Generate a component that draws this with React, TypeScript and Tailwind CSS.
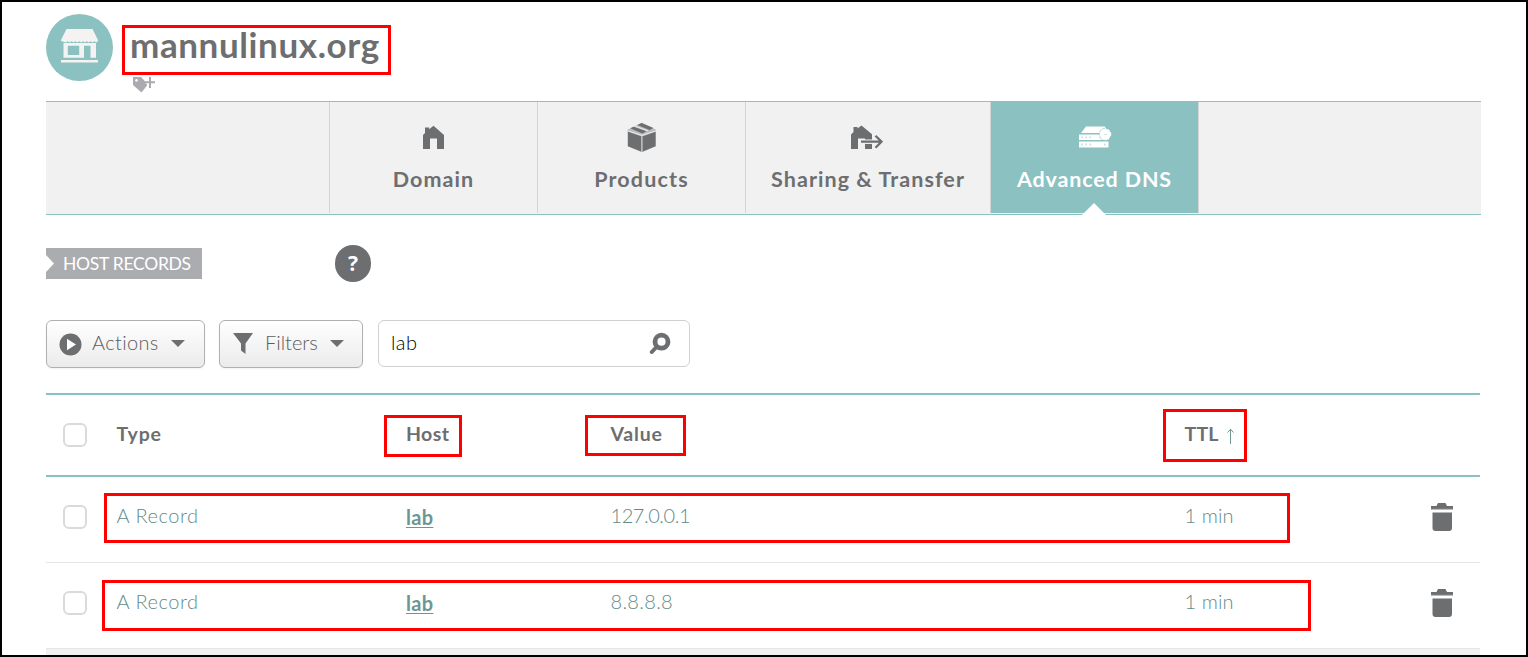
import type { ReactNode } from 'react';

function StoreIcon() {
  return (
    <svg width="67" height="67" viewBox="0 0 67 67" className="shrink-0">
      <circle cx="33.5" cy="33.5" r="33.5" fill="#8bc1c1" />
      <path
        fill="#f4f3f2"
        d="M20.500 15h26l5.500 11v1l-1.800 1.500-1.800-1.200-1.900 1.200-1.900-1.200-1.900 1.200-1.900-1.200-1.900 1.200-1.900-1.200-1.900 1.200-1.900-1.200-1.900 1.200-1.900-1.200-1.900 1.200-1.900-1.200-1.900 1.200-1.900-1.200-1.900 1.200L15 27v-1z"
      />
      <path fill="#f4f3f2" fillRule="evenodd" d="M17.500 29h32.500V43.700h-5.500V31.800h-6.500v11.900H17.500zM21.800 31.800v9.200h11.400v-9.200z" />
      <path fill="#f4f3f2" d="M15 46h37v2.500H15z" />
    </svg>
  );
}

function TagPlusIcon() {
  return (
    <svg width="24" height="17" viewBox="0 0 24 17" className="mt-px ml-0.5">
      <path fill="#aaabae" fillRule="evenodd" d="M1 1h8l6 6.500v2L9.500 16.500 1 9zM4.500 3a1.400 1.400 0 1 0 .01 0z" />
      <path fill="none" stroke="#fff" strokeWidth="3.500" d="M18 1v11M13.500 6h9.500" />
      <path fill="none" stroke="#aaabae" strokeWidth="2" d="M18 1v11M12.500 6.200h10.500" />
    </svg>
  );
}

function HouseIcon() {
  return (
    <svg width="34" height="34" viewBox="0 0 34 34" fill="#6d6e70">
      <path d="M6 29V15l2-2V7.500h4.200v1.800L16.500 5.800l10.500 9.200V29h-7V18.500h-7V29z" />
    </svg>
  );
}

function BoxIcon() {
  return (
    <svg width="34" height="34" viewBox="0 0 34 34" fill="#6d6e70">
      <path d="M2.500 9.700 17 2.700l14 7v16.500l-14 6-14.500-6z" fill="#b9babb" />
      <path d="M3 11.700 16 16.300V31.500L3 26.200zM17.700 16.300 30.500 11.700V26.200l-12.800 5.300z" />
      <path d="M5.300 8.300 8.500 6.700l12.900 4.600-4 2.100zM12.300 4.900 16.500 3l12 5-4 2.100z" />
      <path d="M3 10.800 17 15.400 31 10.800M9.800 6l13 4.800" fill="none" stroke="#efefef" strokeWidth="1" />
    </svg>
  );
}

function TransferIcon() {
  return (
    <svg width="34" height="34" viewBox="0 0 34 34">
      <path fill="#6d6e70" d="M2 29V14.500l2.500-2.500V7h4v1.500l4-3 10.500 8.800V29h-7V18.500H9V29z" />
      <path fill="none" stroke="#f1f1f1" strokeWidth="4.500" d="M10 21.700h14" />
      <path fill="none" stroke="#6d6e70" strokeWidth="2.300" d="M12 21.700h20M26.500 15.700l6 6-6 6" />
    </svg>
  );
}

function ServerIcon() {
  return (
    <svg width="36" height="34" viewBox="0 0 36 34">
      <path fill="#fff" d="M9 6.500h19l3 6.500H4zM2 14.500h30V20H2zM2 21.500h29.500V27.500H2z" />
      <path fill="none" stroke="#8bc1c1" strokeWidth="1.800" d="M4.500 17.300h1.500M8.500 17.300h1.500M12.500 17.300h1.500M4.500 24.500h1.500M8.500 24.500h1.500M12.500 24.500h1.500M27 24.500h1.500" opacity=".5" />
      <circle cx="28.300" cy="14.300" r="6.500" fill="#8bc1c1" opacity=".6" />
      <circle cx="28.300" cy="14.300" r="5.500" fill="#fff" stroke="#fff" strokeDasharray="2 1.500" />
      <path stroke="#8bc1c1" d="M27 14.500h3" opacity=".4" />
    </svg>
  );
}

function TrashIcon() {
  return (
    <svg width="24" height="28" viewBox="0 0 24 28" className="-mt-[5px] block">
      <path fill="#6d6e70" d="M1 3h5.500L8 0h7.500L17 3h6v3H1zM2.500 9.500H22v15.500q0 3-3 3H5.500q-3 0-3-3z" />
      <path stroke="#aaa" d="M1 6.300h22" />
    </svg>
  );
}

function Tab({ label, icon, width, active, text }: { label: string; icon: ReactNode; width: string; active?: boolean; text: string }) {
  return (
    <button
      className={`relative flex h-[111px] flex-col items-center border-l border-[#d4d4d4] pt-[18px] ${width} ${active ? 'bg-[#8bc1c1] text-white' : 'text-[#6d6e70]'}`}
    >
      <span className="flex h-[34px] items-center">{icon}</span>
      <span className={`mt-[9px] text-[21.500px] font-bold leading-8 whitespace-nowrap ${text}`}>{label}</span>
      {active && (
        <svg className="absolute -bottom-0.5 left-[91px] z-10" width="24" height="12" viewBox="0 0 24 12">
          <path d="M0 12 12 0 24 12z" fill="#fff" />
        </svg>
      )}
    </button>
  );
}

function Checkbox({ className = '' }: { className?: string }) {
  return <span className={`ml-[17px] block size-6 rounded-[6px] border-2 border-[#dadada] bg-white ${className}`} />;
}

const columns = 'grid grid-cols-[70.500px_289.500px_204.500px_574px_245.500px_50px] items-center';

function RecordRow({ value, valueText }: { value: string; valueText: string }) {
  return (
    <div className={`${columns} h-[86px] border-b border-[#e6e6e6] text-[20px] font-light text-[#5f8b88]`}>
      <Checkbox className="-mt-1.5" />
      <span className="-mt-[9px] tracking-[0.550px]">A Record</span>
      <span className="-mt-1.5 text-[20px] font-bold tracking-[0.300px] text-[#6d9693] underline decoration-1 underline-offset-2">lab</span>
      <span className={`-mt-[9px] ${valueText}`}>{value}</span>
      <span className="-mt-[9px] tracking-[0.100px]">1 min</span>
      <TrashIcon />
    </div>
  );
}

function Highlight({ className }: { className: string }) {
  return <div className={`pointer-events-none absolute z-20 border-3 border-[#fe0000] ${className}`} />;
}

export default function App() {
  return (
    <div className="relative h-[657px] w-[1528px] overflow-hidden border-2 border-black bg-white pl-11 font-['Lato',sans-serif]">
      <header className="flex h-[99px] pt-3">
        <StoreIcon />
        <div className="ml-[17px] flex flex-col">
          <h1 className="h-[61px] pt-1 text-[35px] font-bold leading-[52px] tracking-[0.600px] text-[#6d6e70]">mannulinux.org</h1>
          <TagPlusIcon />
        </div>
      </header>

      <nav className="flex h-[114px] w-[1435px] border-y border-[#8bc1c1] bg-[#f1f1f1] pl-[283px]">
        <Tab label="Domain" icon={<HouseIcon />} width="w-[208px]" text="tracking-[1.100px]" />
        <Tab label="Products" icon={<BoxIcon />} width="w-[208px]" text="tracking-[1.150px]" />
        <Tab label="Sharing & Transfer" icon={<span className="-ml-1 block"><TransferIcon /></span>} width="w-[245px]" text="tracking-[1.050px]" />
        <Tab label="Advanced DNS" icon={<ServerIcon />} width="w-[208px]" text="tracking-[0.850px]" active />
        <div className="h-[111px] w-px bg-[#d4d4d4]" />
      </nav>

      <div className="flex h-[105px] pt-[30px]">
        <div className="mt-[3px] flex h-[31px] w-[156px] items-center bg-[#abacb0] text-[17.500px] font-normal text-white">
          <svg width="8" height="19" viewBox="0 0 8 19">
            <path d="M0 1 8 9.500 0 18z" fill="#fff" />
          </svg>
          <span className="mt-px ml-[9px] tracking-[-0.280px] whitespace-nowrap">HOST RECORDS</span>
        </div>
        <div className="ml-[133px] flex h-[37px] w-9 items-center justify-center rounded-full bg-[#6d6e70] font-['Open_Sans',sans-serif] text-[21px] font-bold text-white">?</div>
      </div>

      <div className="flex h-[73px]">
        <button className="flex h-12 w-[159px] items-center rounded-md border border-[#b0b0b0] bg-linear-to-b from-white to-[#ebebeb] pl-3 text-[20px] font-light text-[#5c5d5f] shadow-xs">
          <svg width="23" height="23" viewBox="0 0 23 23">
            <circle cx="11.500" cy="11.500" r="11" fill="#6d6e70" />
            <path d="M8 5.800v11.400l9-5.700z" fill="#fff" />
          </svg>
          <span className="mb-1 ml-[10px] w-[67px] text-left tracking-[0.350px]">Actions</span>
          <svg className="mb-0.5 ml-3" width="14" height="7" viewBox="0 0 14 7">
            <path d="M0 0h14L7 7z" fill="#6d6e70" />
          </svg>
        </button>
        <button className="ml-3.5 flex h-12 w-36 items-center rounded-md border border-[#b0b0b0] bg-linear-to-b from-white to-[#ebebeb] pl-3 text-[20px] font-light text-[#5c5d5f] shadow-xs">
          <svg width="22" height="23" viewBox="0 0 22 23" className="mb-px">
            <path d="M1 1h20l-7.500 10.500V22L9 18.500v-7z" fill="#6d6e70" />
          </svg>
          <span className="mb-1 ml-[11px] w-[53px] text-left">Filters</span>
          <svg className="mb-0.5 ml-3" width="14" height="7" viewBox="0 0 14 7">
            <path d="M0 0h14L7 7z" fill="#6d6e70" />
          </svg>
        </button>
        <div className="ml-[15px] flex h-[47px] w-[312px] items-center rounded-md border border-[#d0d0d0] pr-[18px] pl-3 text-[20px] text-black">
          <span className="mb-[3px] flex-1 font-light tracking-[0.400px]">lab</span>
          <svg width="22" height="23" viewBox="0 0 22 23" fill="none" stroke="#6d6e70">
            <circle cx="12.500" cy="9.700" r="6.500" strokeWidth="4.800" />
            <path d="M7.500 15 2.800 20" strokeWidth="4" strokeLinecap="round" />
          </svg>
        </div>
      </div>

      <div className="w-[1434px]">
        <div className={`${columns} h-[84px] border-y-2 border-[#8bc1c1] text-[19.500px] font-bold text-[#6d6e70]`}>
          <Checkbox />
          <span className="-mt-[3px] tracking-[0.900px]">Type</span>
          <span className="-mt-[3px] tracking-[0.400px]">Host</span>
          <span className="-mt-[3px] tracking-[0.800px]">Value</span>
          <span className="-mt-[3px] flex items-center tracking-[0.200px]">
            TTL
            <svg className="mt-1 ml-2" width="7" height="16" viewBox="0 0 7 16" fill="none" stroke="#6d9693">
              <path d="M3.500 16V1M.5 4.500l3-3.300 3 3.300" />
            </svg>
          </span>
          <span />
        </div>
        <RecordRow value="127.0.0.1" valueText="tracking-[-0.450px]" />
        <RecordRow value="8.8.8.8" valueText="tracking-[0.300px]" />
        <div className="h-1.5 bg-[#f1f1f1]" />
      </div>

      <Highlight className="top-[23px] left-[120px] h-[50px] w-[269px]" />
      <Highlight className="top-[413px] left-[382px] h-[42px] w-[78px]" />
      <Highlight className="top-[413px] left-[583px] h-[41px] w-[101px]" />
      <Highlight className="top-[407px] left-[1161px] h-[53px] w-[84px]" />
      <Highlight className="top-[491px] left-[102px] h-[50px] w-[1186px]" />
      <Highlight className="top-[578px] left-[100px] h-[51px] w-[1209px]" />
    </div>
  );
}
